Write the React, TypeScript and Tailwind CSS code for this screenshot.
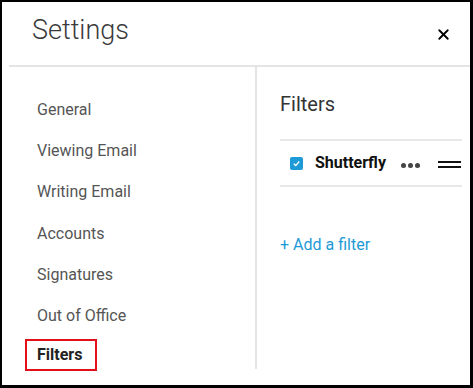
import { X } from "lucide-react";

const nav = ["General", "Viewing Email", "Writing Email", "Accounts", "Signatures", "Out of Office"];

export default function App() {
  return (
    <div
      className="h-[388px] w-[473px] overflow-hidden border-2 border-r-[3px] border-b-[3px] border-black bg-white text-[#333]"
      style={{ fontFamily: "Roboto, 'Liberation Sans', sans-serif" }}
    >
      {/* header */}
      <div className="flex h-[63px] items-center justify-between pb-[6px] pl-[30px] pr-[18px]">
        <h1 className="text-[27px] font-light leading-none text-[#3a3a3a]">Settings</h1>
        <X size={17} strokeWidth={2.6} className="mt-[8px] text-black" />
      </div>
      <div className="ml-[7px] h-[2px] bg-[#e4e4e4]" />

      <div className="flex">
        {/* left nav */}
        <nav className="flex h-[302px] w-[255px] flex-col border-r-2 border-[#e4e4e4] pl-[23px] pt-[22px]">
          {nav.map((n) => (
            <div key={n} className="flex h-[41.3px] shrink-0 items-center pl-[12px] text-[16px] text-[#555]">
              {n}
            </div>
          ))}
          <div className="mt-[2px] flex h-[32px] w-[72px] shrink-0 items-center border-2 border-[#e3101c] pl-[10px] text-[16px] font-bold text-[#222]">
            Filters
          </div>
        </nav>

        {/* right pane */}
        <div className="flex-1 pl-[23px] pr-[8px]">
          <h2 className="flex h-[72px] items-center pt-[2px] text-[20px] text-[#333]">Filters</h2>
          <div className="flex h-[48px] items-center border-y-2 border-[#e8e8e8] pl-[10px]">
            <span className="flex h-[13px] w-[13px] items-center justify-center rounded-[2px] bg-[#1e9ad6]">
              <svg width="9" height="9" viewBox="0 0 10 10">
                <path d="M2 5.2 L4.2 7.3 L8 2.8" fill="none" stroke="white" strokeWidth="1.5" />
              </svg>
            </span>
            <span className="ml-[12px] text-[16px] font-bold text-[#111]">Shutterfly</span>
            <span className="ml-[15px] mt-[4px] flex gap-[2px]">
              <span className="h-[5px] w-[5px] rounded-full bg-[#444]" />
              <span className="h-[5px] w-[5px] rounded-full bg-[#444]" />
              <span className="h-[5px] w-[5px] rounded-full bg-[#444]" />
            </span>
            <span className="ml-[18px] mt-[3px] flex flex-col gap-[3px]">
              <span className="h-[2px] w-[23px] bg-[#111]" />
              <span className="h-[2px] w-[23px] bg-[#111]" />
            </span>
          </div>
          <div className="mt-[46px] text-[16px] text-[#1e9ad6]">+ Add a filter</div>
        </div>
      </div>
    </div>
  );
}
